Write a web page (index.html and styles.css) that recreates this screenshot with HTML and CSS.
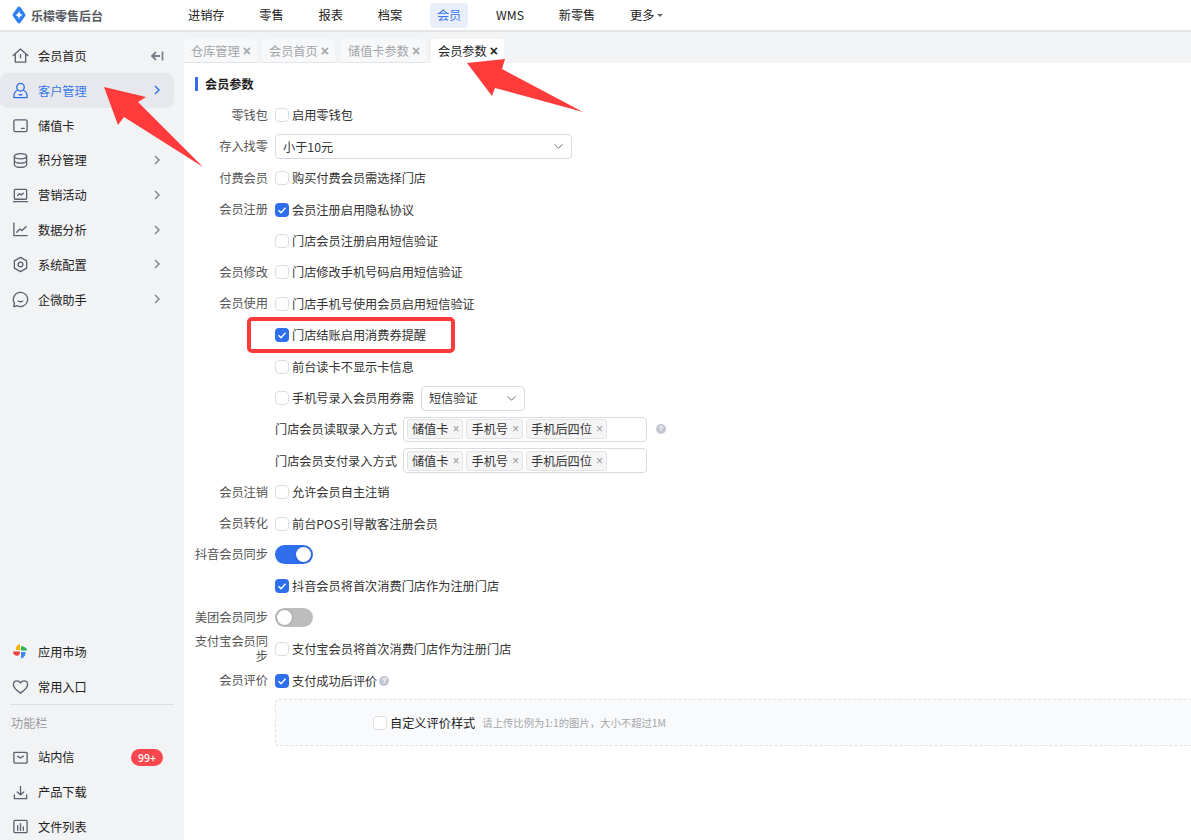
FILE: index.html
```html
<!DOCTYPE html>
<html lang="zh-CN">
<head>
<meta charset="utf-8">
<title>会员参数</title>
<link rel="stylesheet" href="styles.css">
</head>
<body>
<header class="topbar">
  <div class="brand">
    <svg class="logo" viewBox="0 0 14 18" width="14" height="18"><path d="M7 .500C7.600.500 8 .800 8.400 1.300L13 7.700C13.600 8.500 13.600 9.500 13 10.300L8.400 16.700C7.700 17.700 6.300 17.700 5.600 16.700L1 10.300C.4 9.500.4 8.500 1 7.700L5.600 1.300C6 .800 6.400.500 7 .500Z" fill="#2f80f2"/><path d="M7 4.500C7.300 7 8.400 8.300 10.500 9 8.400 9.700 7.300 11 7 13.500 6.700 11 5.600 9.700 3.500 9 5.600 8.300 6.700 7 7 4.500Z" fill="#fff"/></svg>
    <span class="brand-name">乐檬零售后台</span>
  </div>
  <nav class="topnav">
    <a class="topnav-item">进销存</a>
    <a class="topnav-item">零售</a>
    <a class="topnav-item">报表</a>
    <a class="topnav-item">档案</a>
    <a class="topnav-item is-active">会员</a>
    <a class="topnav-item">WMS</a>
    <a class="topnav-item">新零售</a>
    <a class="topnav-item">更多<span class="caret"></span></a>
  </nav>
</header>
<div class="body-wrap">
  <aside class="sidebar">
    <ul class="menu">
      <li class="menu-item">
        <svg class="mi" viewBox="0 0 18 18"><path d="M1.200 9L9 2l7.800 7M3.500 7.500v8.500h11V7.500M9 8v3.500"/></svg>
        <span class="mi-text">会员首页</span>
        <svg class="collapse" viewBox="0 0 14 12"><path d="M6 2L2 6l4 4M2 6h8M12.500 1.500v9"/></svg>
      </li>
      <li class="menu-item is-active">
        <svg class="mi" viewBox="0 0 18 18"><circle cx="9" cy="5.500" r="4"/><path d="M5.500 9C3 10 1.800 12.500 2 16.500h14c.2-4-1-6.500-3.500-7.500M7.500 13.500h3"/></svg>
        <span class="mi-text">客户管理</span>
        <svg class="chev" viewBox="0 0 8 12"><path d="M2 2l4 4-4 4"/></svg>
      </li>
      <li class="menu-item">
        <svg class="mi" viewBox="0 0 18 18"><rect x="2" y="3" width="14" height="12.500" rx="1.500"/><path d="M10 12h3"/></svg>
        <span class="mi-text">储值卡</span>
      </li>
      <li class="menu-item">
        <svg class="mi" viewBox="0 0 18 18"><ellipse cx="9" cy="4.500" rx="6.500" ry="2.800"/><path d="M2.500 4.500v9c0 1.500 3 2.800 6.500 2.800s6.500-1.300 6.500-2.800v-9M2.500 9c0 1.500 3 2.800 6.500 2.800s6.500-1.300 6.500-2.800"/></svg>
        <span class="mi-text">积分管理</span>
        <svg class="chev" viewBox="0 0 8 12"><path d="M2 2l4 4-4 4"/></svg>
      </li>
      <li class="menu-item">
        <svg class="mi" viewBox="0 0 18 18"><rect x="2.500" y="2.500" width="13" height="10.500" rx="1"/><path d="M1.500 15.500h15M6 9l2-2 2 1.500 2-2"/></svg>
        <span class="mi-text">营销活动</span>
        <svg class="chev" viewBox="0 0 8 12"><path d="M2 2l4 4-4 4"/></svg>
      </li>
      <li class="menu-item">
        <svg class="mi" viewBox="0 0 18 18"><path d="M2 2v13.500h14M5 12l3.500-3.500 2 1.500L15 6"/></svg>
        <span class="mi-text">数据分析</span>
        <svg class="chev" viewBox="0 0 8 12"><path d="M2 2l4 4-4 4"/></svg>
      </li>
      <li class="menu-item">
        <svg class="mi" viewBox="0 0 18 18"><path d="M9 1.500l6.500 3.700v7.600L9 16.500l-6.500-3.700V5.200z"/><circle cx="9" cy="9" r="2.500"/></svg>
        <span class="mi-text">系统配置</span>
        <svg class="chev" viewBox="0 0 8 12"><path d="M2 2l4 4-4 4"/></svg>
      </li>
      <li class="menu-item">
        <svg class="mi" viewBox="0 0 18 18"><path d="M9 1.500a7.500 7.500 0 1 1-3.500 14.100L1.800 16.500l.8-3.500A7.500 7.500 0 0 1 9 1.500zM6.500 10.500c1 1.200 4 1.200 5 0"/></svg>
        <span class="mi-text">企微助手</span>
        <svg class="chev" viewBox="0 0 8 12"><path d="M2 2l4 4-4 4"/></svg>
      </li>
    </ul>
    <ul class="menu menu-bottom">
      <li class="menu-item">
        <svg class="mi mi-fill" viewBox="0 0 18 18"><path d="M8.500 1C5.500 1.500 3.800 3.800 4 7.500h4.500z" fill="#f7b500"/><path d="M9.500 3.500V8H16C15.800 5.500 13 3.500 9.500 3.500z" fill="#2db84d"/><path d="M9.500 9.500V16.500C12.500 16 14.500 13 14.500 9.500z" fill="#3b8cf5"/><path d="M8.500 9H1C1 11.500 3 13.500 5.500 13.500 7.500 13.500 8.500 11.500 8.500 9z" fill="#f0423c"/></svg>
        <span class="mi-text">应用市场</span>
      </li>
      <li class="menu-item">
        <svg class="mi" viewBox="0 0 18 18"><path d="M9 16C4 12.500 1.500 10 1.500 6.800 1.500 4.500 3.200 3 5.200 3 6.800 3 8.200 3.800 9 5.200 9.800 3.800 11.200 3 12.800 3c2 0 3.700 1.500 3.700 3.800C16.500 10 14 12.500 9 16z"/></svg>
        <span class="mi-text">常用入口</span>
      </li>
      <li class="menu-divider"></li>
      <li class="menu-head">功能栏</li>
      <li class="menu-item">
        <svg class="mi" viewBox="0 0 18 18"><rect x="2" y="3.500" width="14" height="11.500" rx="1"/><path d="M6 7.500l3 2 3-2"/></svg>
        <span class="mi-text">站内信</span>
        <span class="badge">99+</span>
      </li>
      <li class="menu-item">
        <svg class="mi" viewBox="0 0 18 18"><path d="M9 2.500v9M5.500 8.500L9 11.500l3.500-3M2.500 11.500v4h13v-4"/></svg>
        <span class="mi-text">产品下载</span>
      </li>
      <li class="menu-item">
        <svg class="mi" viewBox="0 0 18 18"><rect x="2" y="2.500" width="14" height="13" rx="1"/><path d="M6 8v5M9 6v7M12 9.500V13"/></svg>
        <span class="mi-text">文件列表</span>
      </li>
    </ul>
  </aside>
  <main class="main">
    <div class="tabs">
      <div class="tab">仓库管理<span class="tab-x">×</span></div>
      <div class="tab">会员首页<span class="tab-x">×</span></div>
      <div class="tab tab-long">储值卡参数<span class="tab-x">×</span></div>
      <div class="tab is-active">会员参数<span class="tab-x">×</span></div>
    </div>
    <section class="panel">
      <h2 class="panel-title">会员参数</h2>
      <div class="form">
        <div class="row"><label class="lbl">零钱包</label><div class="ctl"><span class="cb"></span>启用零钱包</div></div>
        <div class="row"><label class="lbl">存入找零</label><div class="ctl"><div class="select select-wide">小于10元<svg class="sel-arrow" viewBox="0 0 12 8"><path d="M1.500 1.500L6 6l4.500-4.500"/></svg></div></div></div>
        <div class="row"><label class="lbl">付费会员</label><div class="ctl"><span class="cb"></span>购买付费会员需选择门店</div></div>
        <div class="row"><label class="lbl">会员注册</label><div class="ctl"><span class="cb is-on"><svg viewBox="0 0 14 14"><path d="M3.500 7.200l2.500 2.500 4.500-5"/></svg></span>会员注册启用隐私协议</div></div>
        <div class="row"><label class="lbl"></label><div class="ctl"><span class="cb"></span>门店会员注册启用短信验证</div></div>
        <div class="row"><label class="lbl">会员修改</label><div class="ctl"><span class="cb"></span>门店修改手机号码启用短信验证</div></div>
        <div class="row"><label class="lbl">会员使用</label><div class="ctl"><span class="cb"></span>门店手机号使用会员启用短信验证</div></div>
        <div class="row"><label class="lbl"></label><div class="ctl"><span class="cb is-on"><svg viewBox="0 0 14 14"><path d="M3.500 7.200l2.500 2.500 4.500-5"/></svg></span>门店结账启用消费券提醒</div></div>
        <div class="row"><label class="lbl"></label><div class="ctl"><span class="cb"></span>前台读卡不显示卡信息</div></div>
        <div class="row"><label class="lbl"></label><div class="ctl"><span class="cb"></span>手机号录入会员用券需<div class="select select-small">短信验证<svg class="sel-arrow" viewBox="0 0 12 8"><path d="M1.500 1.500L6 6l4.500-4.500"/></svg></div></div></div>
        <div class="row"><label class="lbl"></label><div class="ctl"><span class="ctl-name">门店会员读取录入方式</span>
          <div class="multi"><span class="tag">储值卡<i>×</i></span><span class="tag">手机号<i>×</i></span><span class="tag">手机后四位<i>×</i></span></div><span class="help help-far">?</span></div></div>
        <div class="row"><label class="lbl"></label><div class="ctl"><span class="ctl-name">门店会员支付录入方式</span>
          <div class="multi"><span class="tag">储值卡<i>×</i></span><span class="tag">手机号<i>×</i></span><span class="tag">手机后四位<i>×</i></span></div></div></div>
        <div class="row"><label class="lbl">会员注销</label><div class="ctl"><span class="cb"></span>允许会员自主注销</div></div>
        <div class="row"><label class="lbl">会员转化</label><div class="ctl"><span class="cb"></span>前台POS引导散客注册会员</div></div>
        <div class="row"><label class="lbl">抖音会员同步</label><div class="ctl"><span class="switch is-on"></span></div></div>
        <div class="row"><label class="lbl"></label><div class="ctl"><span class="cb is-on"><svg viewBox="0 0 14 14"><path d="M3.500 7.200l2.500 2.500 4.500-5"/></svg></span>抖音会员将首次消费门店作为注册门店</div></div>
        <div class="row"><label class="lbl">美团会员同步</label><div class="ctl"><span class="switch"></span></div></div>
        <div class="row"><label class="lbl lbl-wrap">支付宝会员同步</label><div class="ctl"><span class="cb"></span>支付宝会员将首次消费门店作为注册门店</div></div>
        <div class="row"><label class="lbl">会员评价</label><div class="ctl"><span class="cb is-on"><svg viewBox="0 0 14 14"><path d="M3.500 7.200l2.500 2.500 4.500-5"/></svg></span>支付成功后评价<span class="help">?</span></div></div>
      </div>
      <div class="dash-box"><span class="cb"></span><span class="dash-label">自定义评价样式</span><span class="hint">请上传比例为1:1的图片，大小不超过1M</span></div>
    </section>
  </main>
</div>
<div class="mark-box"></div>
<svg class="mark-arrow" width="1191" height="840" viewBox="0 0 1191 840">
  <path d="M104 87L146 97L138 102L203 167L124 117L118 125Z" fill="#ff3b3b"/>
  <path d="M505 59L467 63L492 96L495 88L583 112L502 69Z" fill="#ff3b3b"/>
</svg>
</body>
</html>
```
FILE: styles.css
```css
* { box-sizing: border-box; }
html, body { margin: 0; height: 100%; overflow: hidden; }
body {
  font-family: "Noto Sans CJK SC", "Noto Sans", "Liberation Sans", sans-serif;
  font-size: 12.2px;
  color: #333;
  background: #fff;
  position: relative;
}
ul { list-style: none; margin: 0; padding: 0; }

.topbar {
  height: 32px;
  display: flex;
  align-items: center;
  border-bottom: 2px solid #e3e4e6;
  background: #fff;
}
.brand { width: 188px; display: flex; align-items: center; padding-left: 12px; gap: 5px; flex: none; }
.brand-name { font-weight: 700; color: #555a62; font-size: 12px; }
.topnav { display: flex; align-items: center; gap: 20.800px; margin-left: -7px; }
.topnav-item { padding: 0 7px; height: 25px; line-height: 25px; border-radius: 4px; color: #222; white-space: nowrap; display: flex; align-items: center; }
.topnav-item.is-active { background: #e9eefb; color: #3a78e8; }
.caret { display: inline-block; margin-left: 3px; width: 0; height: 0; border: 3px solid transparent; border-top: 3px solid #666; border-bottom: 0; }

.body-wrap { display: flex; height: 808px; }
.sidebar { width: 184px; flex: none; background: #f2f3f5; padding-top: 6.600px; overflow: hidden; }
.menu-item { height: 34.800px; display: flex; align-items: center; width: 174px; position: relative; padding-left: 12px; color: #222; border-radius: 8px; }
.menu-item.is-active { background: #e7e8ed; color: #3a78e8; }
.mi { width: 17px; height: 17px; flex: none; margin-right: 9px; fill: none; stroke: #5c6170; stroke-width: 1.400; stroke-linejoin: round; stroke-linecap: round; }
.menu-item.is-active .mi { stroke: #2f6fed; }
.mi-fill { stroke: none; }
.mi-text { white-space: nowrap; }
.chev { position: absolute; left: 153px; top: 11px; width: 8px; height: 12px; fill: none; stroke: #85888f; stroke-width: 1.500; }
.menu-item.is-active .chev { stroke: #3a78e8; }
.collapse { position: absolute; left: 150px; top: 11px; width: 14px; height: 12px; fill: none; stroke: #7d8088; stroke-width: 1.800; }
.menu-bottom { margin-top: 317.400px; }
.menu-divider { height: 1px; width: 164px; margin: 0 0 0 10px; background: #dcdde0; }
.menu-head { height: 35px; line-height: 36px; padding-left: 11px; color: #9a9ca1; }
.badge { position: absolute; left: 131px; top: 9px; width: 32px; height: 17px; border-radius: 9px; background: #f9474f; color: #fff; font-size: 10.500px; font-weight: 500; text-align: center; line-height: 17px; }

.main { flex: 1; min-width: 0; overflow: hidden; display: flex; flex-direction: column; }
.tabs { height: 31px; background: #f2f3f5; display: flex; align-items: flex-end; gap: 5px; flex: none; }
.tab { height: 24px; padding: 0 7px; display: flex; align-items: center; justify-content: space-between; background: #f7f8f9; color: #a3a5a9; border-radius: 3px 3px 0 0; border-bottom: 1px solid #e3e4e6; gap: 3px; white-space: nowrap; width: 73px; }
.tab-long { width: 85px; margin-left: 1px; }
.tab-x { color: #a5a7ab; font-size: 14px; line-height: 1; font-family: "Liberation Sans", sans-serif; font-weight: 700; }
.tab.is-active { background: #fff; color: #222; border-bottom-color: #fff; }
.tab.is-active .tab-x { color: #222; }

.panel { flex: 1; padding: 0 0 0 10px; }
.panel-title { margin: 14px 0 8.800px 1px; line-height: 14px; border-left: 3px solid #2f6fed; padding-left: 7px; font-size: 12.200px; font-weight: 700; color: #222; height: 14px; }
.form { display: flex; flex-direction: column; }
.row { height: 31.400px; display: flex; align-items: center; }
.lbl { width: 74px; flex: none; text-align: right; color: #555; line-height: 15px; }
.lbl-wrap { width: 74px; }
.ctl { margin-left: 7px; display: flex; align-items: center; color: #333; white-space: nowrap; }
.cb { width: 14px; height: 14px; border: 1px solid #dcdde0; border-radius: 4px; background: #fff; margin-right: 3px; flex: none; display: inline-block; }
.cb svg { display: block; width: 14px; height: 14px; margin: 0; fill: none; stroke: #fff; stroke-width: 1.300; }
.cb.is-on { background: #2f6fed; border: 0; }
.select { height: 25px; border: 1px solid #d9dadd; border-radius: 4px; display: flex; align-items: center; justify-content: space-between; padding: 0 7px; background: #fff; color: #333; }
.select-wide { width: 297px; }
.select-small { width: 104px; margin-left: 7px; }
.sel-arrow { width: 11px; height: 7px; fill: none; stroke: #666; stroke-width: 1.100; }
.ctl-name { margin-right: 6px; }
.multi { width: 244px; height: 25px; border: 1px solid #d9dadd; border-radius: 4px; display: flex; align-items: center; gap: 3px; padding-left: 3px; background: #fff; }
.tag { height: 20px; padding: 0 3px 0 4px; border: 1px solid #e2e3e5; border-radius: 3px; background: #f5f5f5; display: flex; align-items: center; gap: 4px; color: #333; }
.tag i { font-style: normal; color: #999; font-size: 12px; font-family: "Liberation Sans", sans-serif; }
.help { width: 10px; height: 10px; border-radius: 50%; background: #c3c6d1; color: #fff; font-size: 8px; line-height: 10px; text-align: center; margin-left: 2px; font-weight: 700; font-family: "Liberation Sans", sans-serif; }
.help-far { margin-left: 9px; }
.switch { width: 38px; height: 19px; border-radius: 10px; background: #bdbdbd; position: relative; display: block; }
.switch::after { content: ""; position: absolute; left: 1.500px; top: 2px; width: 15px; height: 15px; border-radius: 50%; background: #fff; box-shadow: 0 0 2px rgba(0, 0, 0, .3); }
.switch.is-on { background: #2f6fed; }
.switch.is-on::after { left: 21px; }
.dash-box { margin: 3.200px -40px 0 81px; height: 47px; border: 1px dashed #e2e3e6; border-radius: 4px; background: #f9fafc; display: flex; align-items: center; padding-left: 97px; }
.dash-label { color: #222; }
.hint { color: #a5a7ab; font-size: 10.350px; margin-left: 7px; }

.mark-box { position: absolute; left: 247px; top: 317px; width: 208px; height: 36px; border: 4px solid #ff3b3b; border-radius: 5px; }
.mark-arrow { position: absolute; left: 0; top: 0; pointer-events: none; }
```
